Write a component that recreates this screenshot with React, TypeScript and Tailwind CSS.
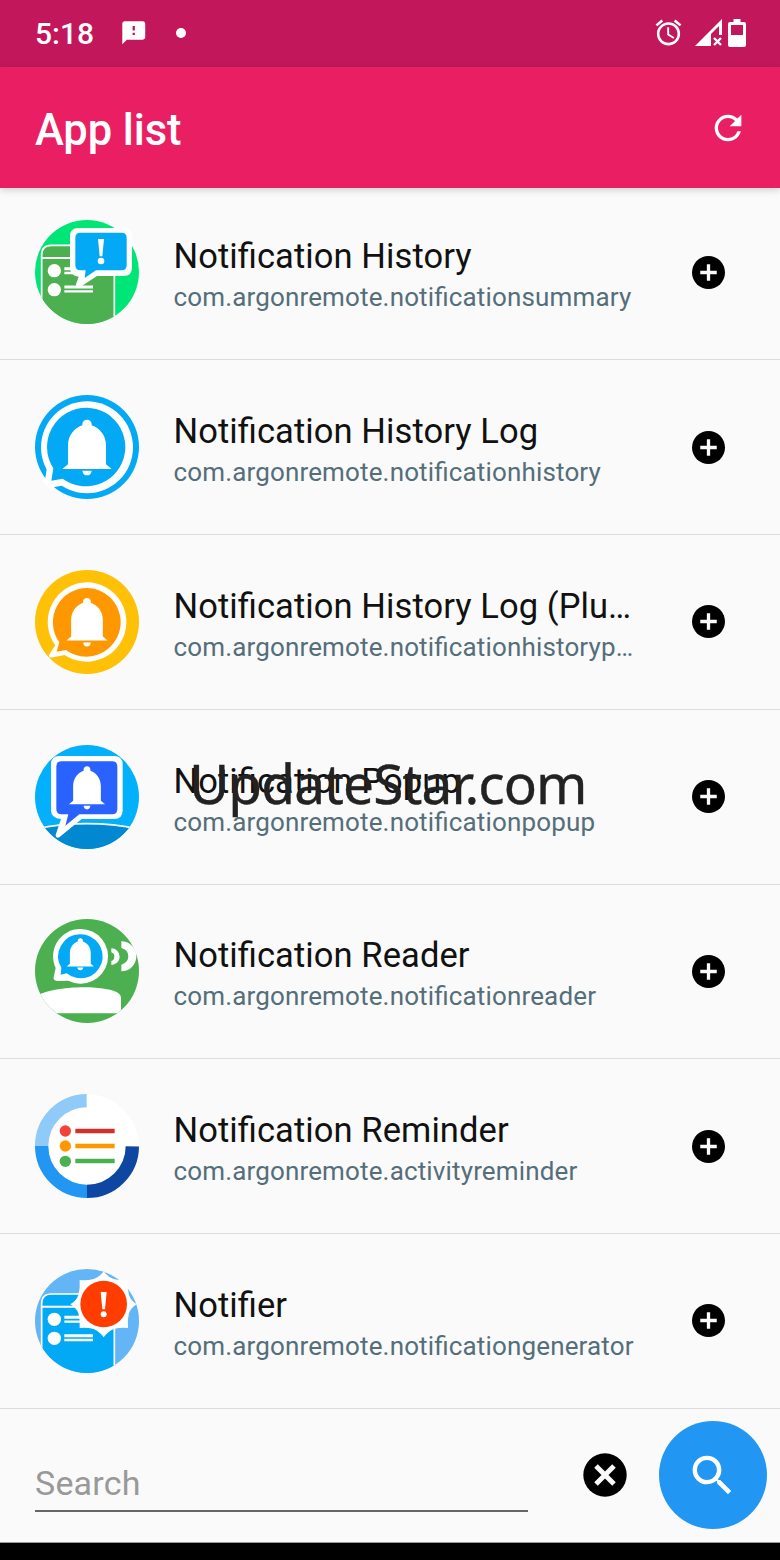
import type { ReactNode } from "react";
import { MdAccessAlarm, MdFeedback, MdRefresh, MdSearch } from "react-icons/md";

const BELL =
  "M200 119c-8 0-14 6-14 13v4c-26 9-43 32-43 60v57l-17 14h148l-17-14v-57c0-28-17-51-43-60v-4c0-7-6-13-14-13z";

function WindowPanel({ fill }: { fill: string }) {
  return (
    <>
      <path
        d="M64 380V150q0-29 29-29h160q29 0 29 29v230z"
        fill={fill}
        stroke="#fff"
        strokeWidth="5"
      />
      <path d="M64 159h218" stroke="#fff" strokeWidth="6" />
      <circle cx="102" cy="197" r="20" fill="#fff" />
      <circle cx="102" cy="254" r="20" fill="#fff" />
      <path d="M132 191h86M132 246h86" stroke="#fff" strokeWidth="9" />
      <path d="M132 204h86M132 259h86" stroke="#fff" strokeWidth="7" />
    </>
  );
}

function SummaryIcon() {
  return (
    <svg viewBox="44 45 312 312" className="size-[104px]">
      <clipPath id="summary">
        <circle cx="200" cy="201" r="156" />
      </clipPath>
      <g clipPath="url(#summary)">
        <rect x="44" y="45" width="312" height="312" fill="#00e676" />
        <WindowPanel fill="#4caf50" />
      </g>
      <path
        d="M174 69h136q25 0 25 25v94q0 25-25 25h-80l-50 33q-13 2-13-8l8-23q-26-3-26-27V94q0-25 25-25z"
        fill="#fff"
      />
      <path
        d="M180 83h124q15 0 15 15v83q0 15-15 15h-77l-34 23 3-23h-16q-15 0-15-15V98q0-15 15-15z"
        fill="#03a9f4"
      />
      <path d="M233 102h18l-5 52h-8z" fill="#fff" />
      <circle cx="242" cy="168" r="10" fill="#fff" />
    </svg>
  );
}

function HistoryIcon() {
  return (
    <svg viewBox="44 45 312 312" className="size-[104px]">
      <circle cx="200" cy="201" r="156" fill="#03a9f4" />
      <circle cx="200" cy="202" r="138" fill="#fff" />
      <path d="M80 262L75 294 66 302 94 332 102 321 134 316z" fill="#fff" />
      <path
        d="M200 83A118 118 0 1 1 127 296L93 302 99 265A118 118 0 0 1 200 83z"
        fill="#03a9f4"
      />
      <path d={BELL} fill="#fff" />
      <path d="M186 272h28q-2 14-14 14t-14-14z" fill="#fff" />
    </svg>
  );
}

function HistoryPlusIcon() {
  return (
    <svg viewBox="44 44 312 312" className="size-[104px]">
      <circle cx="200" cy="200" r="156" fill="#ffc107" />
      <path
        d="M200 81A119 119 0 1 1 133 299L91 307Q84 306 86 298L105 270A119 119 0 0 1 200 81z"
        fill="#fff"
      />
      <path
        d="M200 98A103 103 0 1 1 137 284L109 289 117 261A103 103 0 0 1 200 98z"
        fill="#ff9800"
      />
      <g transform="translate(200 128) scale(.835 .86) translate(-200 -119)" fill="#fff">
        <path d={BELL} />
        <path d="M186 274h28q-2 14-14 14t-14-14z" />
      </g>
    </svg>
  );
}

function PopupIcon() {
  return (
    <svg viewBox="44 43 312 312" className="size-[104px]">
      <clipPath id="popup">
        <circle cx="200" cy="199" r="156" />
      </clipPath>
      <g clipPath="url(#popup)">
        <rect x="44" y="43" width="312" height="312" fill="#03b0fb" />
        <path d="M40 296Q200 262 360 296V360H40z" fill="#0288d1" stroke="#fff" strokeWidth="5" />
      </g>
      <path
        d="M117 76h164q26 0 26 26v137q0 26-26 26h-97l-67 55q-12 4-11-8l16-47q-30-2-30-26V102q0-26 25-26z"
        fill="#fff"
      />
      <path
        d="M123 92h153q15 0 15 15v129q0 15-15 15H177l-42 34 9-34h-21q-15 0-15-15V107q0-15 15-15z"
        fill="#2962ff"
      />
      <g transform="translate(200 107) scale(.73 .77) translate(-200 -119)" fill="#fff">
        <path d={BELL} />
        <path d="M186 273h28q-2 14-14 14t-14-14z" />
      </g>
    </svg>
  );
}

function ReaderIcon() {
  return (
    <svg viewBox="44 43 312 312" className="size-[104px]">
      <clipPath id="reader">
        <circle cx="200" cy="199" r="156" />
      </clipPath>
      <g clipPath="url(#reader)">
        <rect x="44" y="43" width="312" height="312" fill="#4caf50" />
        <path d="M44 278C85 242 265 238 297 268Q302 272 302 280V326H44z" fill="#fff" />
      </g>
      <path
        d="M180 73A82 82 0 1 1 144 228L110 229Q98 227 100 218L106 190A82 82 0 0 1 180 73z"
        fill="#fff"
      />
      <path
        d="M180 89A66 66 0 1 1 139 206L121 210 123 189A66 66 0 0 1 180 89z"
        fill="#03a9f4"
      />
      <g transform="translate(180 101) scale(.55 .57) translate(-200 -119)" fill="#fff">
        <path d={BELL} />
        <path d="M184 273h32q-2 14-16 14t-16-14z" />
      </g>
      <path
        d="M273 131A24 24 0 0 1 273 181V169Q282 166 282 156T273 143zM303 110A45 45 0 0 1 303 200V180Q324 174 324 155T303 130z"
        fill="#fff"
      />
    </svg>
  );
}

function ReminderIcon() {
  return (
    <svg viewBox="44 42 312 312" className="size-[104px]">
      <circle cx="200" cy="198" r="155" fill="#fff" />
      <g fill="none" strokeWidth="40">
        <path d="M64 198A136 136 0 0 1 199 62" stroke="#90caf9" />
        <path d="M64 198A136 136 0 0 0 200 334" stroke="#2196f3" />
        <path d="M200 334A136 136 0 0 0 336 199" stroke="#0d47a1" />
      </g>
      <circle cx="135" cy="153" r="17" fill="#f44336" />
      <circle cx="135" cy="198" r="17" fill="#ff9800" />
      <circle cx="135" cy="244" r="17" fill="#4caf50" />
      <path d="M165 153h118" stroke="#d32f2f" strokeWidth="13" />
      <path d="M165 198h118" stroke="#ff9800" strokeWidth="13" />
      <path d="M165 243h118" stroke="#4caf50" strokeWidth="13" />
    </svg>
  );
}

function GeneratorIcon() {
  return (
    <svg viewBox="44 42 312 312" className="size-[104px] overflow-visible">
      <clipPath id="generator">
        <circle cx="200" cy="198" r="156" />
      </clipPath>
      <g clipPath="url(#generator)">
        <rect x="44" y="42" width="312" height="312" fill="#64b5f6" />
        <g transform="translate(0 -4)">
          <WindowPanel fill="#03a9f4" />
        </g>
      </g>
      <path
        d="M250 49Q262 66 280 72Q302 78 323 75Q320 98 326 120Q332 138 349 148Q332 158 326 175Q320 196 323 219Q302 216 280 222Q262 230 250 247Q238 230 220 222Q198 216 178 219Q180 196 174 175Q168 158 150 148Q168 138 174 120Q180 98 178 75Q198 78 220 72Q238 66 250 49z"
        fill="#fff"
      />
      <circle cx="250" cy="147" r="70" fill="#ff3d00" />
      <path d="M241 111h18l-5 52h-8z" fill="#fff" />
      <circle cx="250" cy="178" r="9" fill="#fff" />
    </svg>
  );
}

type AppEntry = { title: string; pkg: string; icon: ReactNode };

const apps: AppEntry[] = [
  {
    title: "Notification History",
    pkg: "com.argonremote.notificationsummary",
    icon: <SummaryIcon />,
  },
  {
    title: "Notification History Log",
    pkg: "com.argonremote.notificationhistory",
    icon: <HistoryIcon />,
  },
  {
    title: "Notification History Log (Plu…",
    pkg: "com.argonremote.notificationhistoryp…",
    icon: <HistoryPlusIcon />,
  },
  {
    title: "Notification Popup",
    pkg: "com.argonremote.notificationpopup",
    icon: <PopupIcon />,
  },
  {
    title: "Notification Reader",
    pkg: "com.argonremote.notificationreader",
    icon: <ReaderIcon />,
  },
  {
    title: "Notification Reminder",
    pkg: "com.argonremote.activityreminder",
    icon: <ReminderIcon />,
  },
  {
    title: "Notifier",
    pkg: "com.argonremote.notificationgenerator",
    icon: <GeneratorIcon />,
  },
];

function StatusBar() {
  return (
    <div className="flex h-[67px] items-center bg-[#c2185b] pr-[34px] pl-[35px] text-white">
      <span className="w-[60px] text-[30px] leading-none font-medium">5:18</span>
      <div className="flex flex-1 items-center pb-[2px]">
        <MdFeedback className="ml-[25px] size-[27.5px]" />
        <span className="ml-[28px] size-[10px] rounded-full bg-white" />
        <MdAccessAlarm className="ml-auto size-[31px]" />
        <svg viewBox="0 0 27 27" className="ml-[11px] size-[27px]" fill="currentColor">
          <path d="M27 0V16H24V7L16 15V27H0z" />
          <path d="M19 19l7 7M26 19l-7 7" stroke="currentColor" strokeWidth="2.4" />
        </svg>
        <svg viewBox="0 0 18 28" className="ml-[6px] h-[28px] w-[18px]" fill="currentColor">
          <path
            fillRule="evenodd"
            d="M5.500 0h7v3H16q2 0 2 2v21q0 2-2 2H2q-2 0-2-2V5q0-2 2-2h3.500zM3 6v10h12V6z"
          />
        </svg>
      </div>
    </div>
  );
}

function AddIcon() {
  return (
    <svg viewBox="0 0 32 32" className="mr-[3px] size-[33px]">
      <circle cx="16" cy="16" r="16" />
      <path d="M16 8v16M8 16h16" stroke="#fafafa" strokeWidth="3.2" />
    </svg>
  );
}

function ClearIcon() {
  return (
    <svg viewBox="0 0 44 44" className="ml-[54.5px] size-[44px]">
      <circle cx="22" cy="22" r="21.700" />
      <path d="M13 13l18 18M31 13L13 31" stroke="#fafafa" strokeWidth="5" />
    </svg>
  );
}

export default function App() {
  return (
    <main className="relative flex h-[1560px] w-[780px] flex-col overflow-hidden bg-[#fafafa] font-['Roboto',sans-serif]">
      <StatusBar />
      <header className="z-10 flex h-[121px] items-center justify-between bg-[#e91e63] pr-[32px] pl-[35px] text-white shadow-[0_2px_7px_rgba(0,0,0,0.18)]">
        <h1 className="pt-[6px] text-[43.5px] leading-none font-medium tracking-[-0.1px]">App list</h1>
        <MdRefresh className="size-[40px]" />
      </header>

      <ul>
        {apps.map((app) => (
          <li
            key={app.pkg}
            className="flex h-[174.75px] items-center border-b border-[#dcdcdc] pr-[52px] pl-[35px] first:-mt-[2.5px]"
          >
            {app.icon}
            <div className="ml-[34.5px] flex-1 pt-[6px] whitespace-nowrap [font-feature-settings:'liga'_1]">
              <p className="text-[34.5px] leading-[44px] tracking-[0.08px] text-[#111]">{app.title}</p>
              <p className="text-[26px] leading-[38px] tracking-[0.15px] text-[#546e7a]">{app.pkg}</p>
            </div>
            <AddIcon />
          </li>
        ))}
      </ul>

      <div className="flex h-[134px] shrink-0 items-center border-b border-[#999] pr-[13px] pl-[35px]">
        <div className="mt-[2px] h-[72px] w-[493px] border-b-2 border-[#666] pt-[21px] text-[34px] leading-[44px] tracking-[0.2px] text-[#999]">
          Search
        </div>
        <ClearIcon />
        <button className="ml-auto flex size-[108px] items-center justify-center rounded-full bg-[#2196f3] pr-[2px] text-white">
          <MdSearch className="size-[53px]" />
        </button>
      </div>
      <div className="flex-1 bg-black" />

      <p className="absolute top-[745px] left-[189px] font-['Noto_Sans',sans-serif] text-[55px] leading-[75px] tracking-[-0.9px] whitespace-nowrap text-[#222] [-webkit-text-stroke:0.4px_#222]">
        UpdateStar.com
      </p>
    </main>
  );
}
